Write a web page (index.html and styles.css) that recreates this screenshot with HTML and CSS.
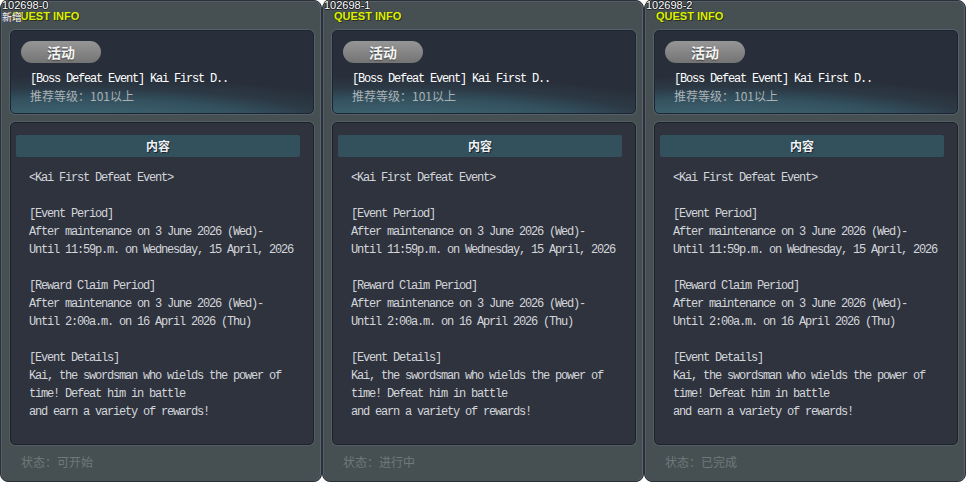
FILE: index.html
```html
<!DOCTYPE html>
<html lang="en">
<head>
    <meta charset="UTF-8">
    <title>quest-info</title>
    <link rel="stylesheet" href="styles.css">
</head>
<body>
<div class="quest-list">
    <div class="quest-panel">
        <div class="quest-id">102698-0</div>
        <div class="quest-new">新增</div>
        <div class="quest-title">QUEST INFO</div>
        <div class="quest-summary">
            <div class="quest-tag">活动</div>
            <div class="quest-name">[Boss Defeat Event] Kai First D..</div>
            <div class="quest-level">推荐等级：101以上</div>
        </div>
        <div class="quest-content">
            <div class="quest-content-head">内容</div>
            <div class="quest-text">&lt;Kai First Defeat Event&gt;

[Event Period]
After maintenance on 3 June 2026 (Wed)-
Until 11:59p.m. on Wednesday, 15 April, 2026

[Reward Claim Period]
After maintenance on 3 June 2026 (Wed)-
Until 2:00a.m. on 16 April 2026 (Thu)

[Event Details]
Kai, the swordsman who wields the power of
time! Defeat him in battle
and earn a variety of rewards!</div>
        </div>
        <div class="quest-state">状态：可开始</div>
    </div>

    <div class="quest-panel">
        <div class="quest-id">102698-1</div>
        <div class="quest-title">QUEST INFO</div>
        <div class="quest-summary">
            <div class="quest-tag">活动</div>
            <div class="quest-name">[Boss Defeat Event] Kai First D..</div>
            <div class="quest-level">推荐等级：101以上</div>
        </div>
        <div class="quest-content">
            <div class="quest-content-head">内容</div>
            <div class="quest-text">&lt;Kai First Defeat Event&gt;

[Event Period]
After maintenance on 3 June 2026 (Wed)-
Until 11:59p.m. on Wednesday, 15 April, 2026

[Reward Claim Period]
After maintenance on 3 June 2026 (Wed)-
Until 2:00a.m. on 16 April 2026 (Thu)

[Event Details]
Kai, the swordsman who wields the power of
time! Defeat him in battle
and earn a variety of rewards!</div>
        </div>
        <div class="quest-state">状态：进行中</div>
    </div>

    <div class="quest-panel">
        <div class="quest-id">102698-2</div>
        <div class="quest-title">QUEST INFO</div>
        <div class="quest-summary">
            <div class="quest-tag">活动</div>
            <div class="quest-name">[Boss Defeat Event] Kai First D..</div>
            <div class="quest-level">推荐等级：101以上</div>
        </div>
        <div class="quest-content">
            <div class="quest-content-head">内容</div>
            <div class="quest-text">&lt;Kai First Defeat Event&gt;

[Event Period]
After maintenance on 3 June 2026 (Wed)-
Until 11:59p.m. on Wednesday, 15 April, 2026

[Reward Claim Period]
After maintenance on 3 June 2026 (Wed)-
Until 2:00a.m. on 16 April 2026 (Thu)

[Event Details]
Kai, the swordsman who wields the power of
time! Defeat him in battle
and earn a variety of rewards!</div>
        </div>
        <div class="quest-state">状态：已完成</div>
    </div>
</div>
</body>
</html>
```

FILE: styles.css
```css
/*reset*/
* {
    margin: 0;
    padding: 0;
    box-sizing: border-box;
}

body {
    background-color: #fff;
    font-family: "Noto Sans CJK SC", sans-serif;
}

.quest-list {
    display: flex;
}

.quest-panel {
    position: relative;
    width: 322px;
    height: 482px;
    display: flex;
    flex-direction: column;
    background-color: #465052;
    border: 1px solid #2c3137;
    border-radius: 8px;
    box-shadow: inset -1px 0 0 #5b6475, inset 1px 1px 0 #555e66;
}

/* id label and "new" mark sit on top of the panel */
.quest-id {
    position: absolute;
    top: -2px;
    left: 1px;
    font-family: "Liberation Sans", sans-serif;
    font-size: 11px;
    color: #fff;
    text-shadow: 1px 0 0 #1c2024, -1px 0 0 #1c2024, 0 1px 0 #1c2024, 0 -1px 0 #1c2024;
    z-index: 2;
}

.quest-new {
    position: absolute;
    top: 10px;
    left: 1px;
    font-size: 10px;
    line-height: 12px;
    color: #f2f2f2;
    text-shadow: 1px 0 0 #6a4a30, 0 1px 0 #304a8a;
    z-index: 2;
}

.quest-title {
    height: 29px;
    padding: 8px 0 0 11px;
    font-family: "Liberation Sans", sans-serif;
    font-size: 11px;
    font-weight: bold;
    line-height: 14px;
    color: #dcf000;
    text-shadow: 1px 1px 0 #2a3020, -1px 0 0 #3a4030;
}

/* teal glow rises from the bottom left of the summary card */
.quest-summary {
    width: 304px;
    height: 84px;
    margin-left: 9px;
    padding: 10px 0 0 19px;
    border: 1px solid #1e252c;
    border-radius: 5px;
    background: radial-gradient(ellipse 150% 90% at 20% 125%, #47717f 0%, #3c5f6d 30%, #33505e 48%, #2c3a46 62%, #282f3a 78%);
    box-shadow: 0 0 0 1px #536070;
}

.quest-tag {
    width: 80px;
    height: 22px;
    margin-left: -9px;
    border-radius: 11px;
    background: linear-gradient(#969696, #858585 50%, #747474);
    text-align: center;
    font-size: 14px;
    font-weight: bold;
    line-height: 22px;
    color: #f4f4f4;
    text-shadow: 0 1px 1px #444;
}

.quest-name {
    margin-top: 6px;
    padding-top: 2px;
    font-family: "Liberation Mono", monospace;
    font-size: 12px;
    letter-spacing: -1.2px;
    line-height: 16px;
    color: #fff;
}

.quest-level {
    font-size: 12px;
    line-height: 18px;
    color: #aab2b6;
}

.quest-content {
    width: 304px;
    height: 323px;
    margin: 8px 0 0 9px;
    padding: 12px 0 0 5px;
    border: 1px solid #1e2228;
    border-radius: 5px;
    background-color: #2f333e;
    box-shadow: 0 0 0 1px #535d64;
}

.quest-content-head {
    width: 284px;
    height: 22px;
    border-radius: 2px;
    background-color: #33505d;
    text-align: center;
    font-size: 12px;
    font-weight: bold;
    line-height: 22px;
    color: #eef2f4;
    text-shadow: 1px 1px 0 #1a2228;
}

.quest-text {
    margin: 12px 0 0 13px;
    white-space: pre;
    font-family: "Liberation Mono", monospace;
    font-size: 12px;
    letter-spacing: -1.2px;
    line-height: 18px;
    color: #d2d6da;
}

.quest-state {
    padding: 8px 0 0 20px;
    font-size: 12px;
    line-height: 18px;
    color: #6e797a;
}
```
